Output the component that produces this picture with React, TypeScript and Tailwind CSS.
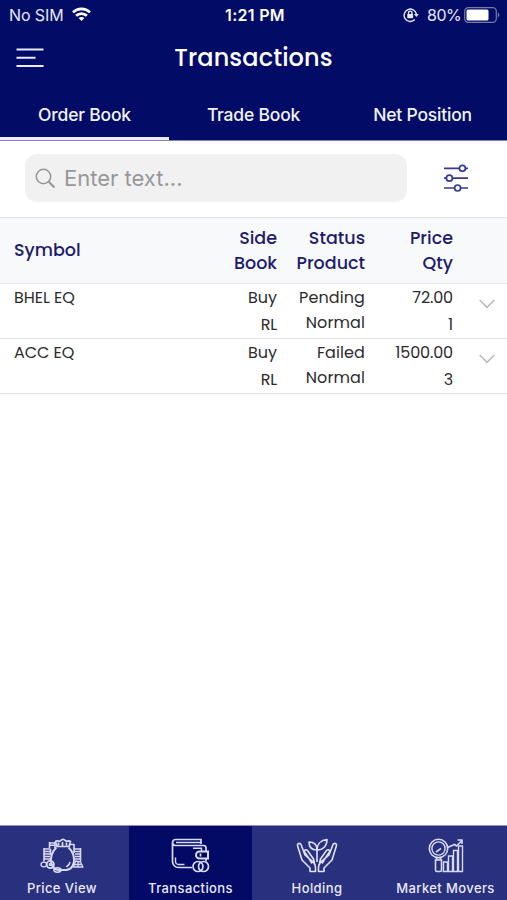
import type { ReactNode } from "react";

const geo = "font-['Poppins','Inter',sans-serif]";
const sys = "font-['Inter',sans-serif]";

function StatusBar() {
  return (
    <div className={`grid h-[30px] grid-cols-3 items-center text-[16px] leading-[30px] text-[#e4e6fa] ${sys}`}>
      <div className="flex items-center pl-[9px]">
        <span className="w-[54px] whitespace-nowrap tracking-[-0.1px]">No SIM</span>
        <svg className="mb-[2px] ml-[9px]" width="19" height="15" viewBox="0 0 19 15" fill="none" stroke="#fff" strokeWidth="2.7">
          <path d="M1 5.4C5.7.8 13.3.8 18 5.4M4.1 8.7c3-2.9 7.8-2.9 10.8 0" />
          <path d="M9.5 14 6.6 11.1c1.6-1.5 4.2-1.5 5.8 0z" fill="#fff" stroke="none" />
        </svg>
      </div>
      <div className="text-center font-semibold tracking-[0.3px] whitespace-nowrap text-white">
        <span className="pl-[3px]">1:21 PM</span>
      </div>
      <div className="flex items-center justify-end pr-[7px]">
        <svg className="mb-px" width="16" height="16" viewBox="0 0 16 16" fill="none" stroke="#e8eaff" strokeWidth="1.4">
          <path d="M11.8 12.600A6.200 6.200 0 1 1 13.400 7" />
          <path d="M11 7h4.800l-2.400 3z" fill="#e8eaff" stroke="none" />
          <rect x="4.300" y="7" width="5.800" height="4.200" fill="#e8eaff" stroke="none" />
          <path d="M5.500 7V5.800a1.700 1.700 0 0 1 3.400 0V7" />
        </svg>
        <span className="ml-[8px] w-[35px] tracking-[-0.5px] whitespace-nowrap">80%</span>
        <svg className="ml-[2px]" width="36" height="16" viewBox="0 0 36 16" fill="none">
          <rect x=".7" y=".7" width="31.6" height="14.6" rx="3.6" stroke="#777ba9" strokeWidth="1.2" />
          <rect x="2.5" y="2.5" width="22" height="11" rx="1.5" fill="#fff" />
          <path d="M33.8 5.5c2 .8 2 4.200 0 5z" fill="#777ba9" />
        </svg>
      </div>
    </div>
  );
}

function Header() {
  return (
    <div className="grid h-[56px] grid-cols-[1fr_auto_1fr] items-center">
      <svg className="ml-[16px]" width="29" height="20" viewBox="0 0 29 20" stroke="#e9eaff" strokeWidth="2">
        <path d="M.5 1.500h27M.5 9.800h19M.5 18h27" />
      </svg>
      <h1 className={`text-[24px] font-medium tracking-[0.1px] text-white ${geo}`}>Transactions</h1>
      <span />
    </div>
  );
}

const tabs = ["Order Book", "Trade Book", "Net Position"];

function Tabs() {
  return (
    <div className="grid h-[55px] grid-cols-3 border-b border-[#8583b4]">
      {tabs.map((tab, i) => (
        <div
          key={tab}
          className={`flex flex-col items-center border-b-[3px] pt-[17px] text-[17.5px] leading-[24px] font-medium tracking-[-0.2px] text-[#f2f3ff] ${sys} ${
            i === 0 ? "border-[#eeeaff]" : "border-transparent"
          }`}
        >
          {tab}
        </div>
      ))}
    </div>
  );
}

function SearchBar() {
  return (
    <div className="flex h-[76px] items-center bg-white pb-[2px] pl-[25px]">
      <div className="flex h-[48px] w-[382px] items-center rounded-[12px] bg-[#f1f1f1] pl-[10px]">
        <svg width="21" height="21" viewBox="0 0 21 21" fill="none" stroke="#97979b" strokeWidth="1.5">
          <circle cx="8.5" cy="8.5" r="7.200" />
          <path d="m13.700 13.700 5.800 5.800" strokeWidth="2" />
        </svg>
        <span className={`ml-[8px] text-[22px] text-[#97979b] ${sys}`}>Enter text...</span>
      </div>
      <svg className="ml-[37px]" width="24" height="28" viewBox="0 0 24 28" fill="none" stroke="#363b91" strokeWidth="1.7">
        <path d="M0 4.300h15.200M21.500 4.300H24M0 14.200h2.200M8.500 14.200H24M0 24h10.400M16.700 24H24" />
        <circle cx="18.400" cy="4.300" r="3" />
        <circle cx="5.400" cy="14.200" r="3" />
        <circle cx="13.600" cy="24" r="3" />
      </svg>
    </div>
  );
}

const columns = "grid grid-cols-[170px_93px_88px_88px_1fr] pl-[14px]";

function TableHead() {
  return (
    <div
      className={`${columns} h-[66.5px] items-center border-y border-[#e4e4e6] bg-[#f8f9fa] pt-px text-right text-[17.5px] leading-[24.5px] font-medium text-[#1d1b70] ${geo}`}
    >
      <div className="pb-px text-left">Symbol</div>
      <div>
        Side<br />Book
      </div>
      <div>
        Status<br />Product
      </div>
      <div>
        Price<br />Qty
      </div>
    </div>
  );
}

type Order = { symbol: string; side: string; book: string; status: string; product: string; price: string; qty: string };

const orders: Order[] = [
  { symbol: "BHEL EQ", side: "Buy", book: "RL", status: "Pending", product: "Normal", price: "72.00", qty: "1" },
  { symbol: "ACC EQ", side: "Buy", book: "RL", status: "Failed", product: "Normal", price: "1500.00", qty: "3" },
];

function OrderRow({ order }: { order: Order }) {
  return (
    <div className={`${columns} h-[55.25px] border-b border-[#e2e2e4] pt-px text-right text-[16px] leading-[25px] text-[#2b2b2d] ${geo}`}>
      <div className="text-left tracking-[-0.05px]">{order.symbol}</div>
      <div>
        <span className="block h-[27px]">{order.side}</span>
        <span className="block leading-[26px] tracking-[-0.2px]">{order.book}</span>
      </div>
      <div className="tracking-[0.1px]">
        {order.status}
        <br />
        {order.product}
      </div>
      <div className="tracking-[-0.15px]">
        <span className="block h-[27px]">{order.price}</span>
        <span className="block leading-[26px]">{order.qty}</span>
      </div>
      <svg className="mt-[14px] ml-[26px]" width="16" height="10" viewBox="0 0 16 10" fill="none" stroke="#b9b9c1" strokeWidth="1.500">
        <path d="m.7 1 7.300 7.400L15.300 1" />
      </svg>
    </div>
  );
}

function MoneyIcon() {
  return (
    <svg width="44" height="36" viewBox="0 0 44 36" fill="none" stroke="#d9dbf5" strokeWidth="1.3" strokeLinejoin="round">
      <path d="M16.500 9.500c-5 4-6.500 11-5 16 1 4 4 6 7 6.500h8c3-.5 6-2.500 7-6.500 1.500-5 0-12-5-16" strokeWidth="2" />
      <path d="M17 8.500 15.500 3.500c2-1.500 4 .5 5-.8 1.500-1.700 3.500-1.700 5 0 1 1.300 3-.7 5 .8L29 8.500zM18.500 4.500v3M22.500 4v4M26.500 4.500v3" strokeWidth="1.700" />
      <path d="M30 24c-.5 2.500-2 4-4 5" />
      <path d="M4 11h6.500M4 13.500h6.500M4 16h6M4 18.500h6M4 21h6M4 10v13.500M10.500 11v6M9.500 5h5.500M9.500 7.200h5.500M9.500 4v6M15 4v6" strokeWidth="1.600" />
      <path d="M34 11h6.500M34 13.500h6.500M35 16h5.500M35 18.500h5.500M35 21h5.500M40.500 10v13.500M34 10v5M30 6.500h4V10" strokeWidth="1.600" />
      <ellipse cx="3.800" cy="26.500" rx="2.800" ry="2.300" />
      <circle cx="10.300" cy="26.500" r="3.600" strokeWidth="1.800" />
      <circle cx="10.300" cy="26.500" r="1" />
      <ellipse cx="17.500" cy="32" rx="3.500" ry="2.200" strokeWidth="1.600" />
      <path d="m35.500 23-2 6h9.500l-2.500-5zM35 26.500h7M38 23v6" />
    </svg>
  );
}

function WalletIcon() {
  return (
    <svg width="40" height="36" viewBox="0 0 40 36" fill="none" stroke="#dadcf7" strokeWidth="1.700">
      <path d="M21 29.500H7.500A6 6 0 0 1 1.500 23.500V4.500C1.500 2.600 2.800 1.500 4.500 1.500H30V6M1.500 4.500C1.500 6.500 2.800 7.500 4.500 7.500h28A2.500 2.500 0 0 1 35 10v3M5 4.500h25M35 20v3.500" />
      <path d="M4.500 19.500v4a3 3 0 0 0 3 3h6M22 10.200h8.500V13" strokeWidth="1.400" />
      <path d="M28.500 13.500H37v7h-8.500a3.500 3.500 0 0 1 0-7z" strokeWidth="2" />
      <path d="M29.500 15.500v3" />
      <circle cx="27" cy="28.500" r="5" />
      <circle cx="32.500" cy="28.500" r="5" />
    </svg>
  );
}

function HoldingIcon() {
  return (
    <svg width="42" height="36" viewBox="0 0 42 36" fill="none" stroke="#e0e2fb" strokeWidth="1.600" strokeLinejoin="round">
      <path d="M21 24V12M21 12c-5 0-8-3-8-8 5 0 8 3 8 8zM21 12c0-6 4-10 10-10.500C31 8 27 12 21 12z" />
      <path d="M14 33.500V30L6 22 1.500 7.500c-.5-2 2.500-3 3.500-1L9 17l4.500 4c3 2 6 5 6 8.500v4zM13 20.500 8.500 14c-1-2 1.500-3 3-1.500l6 8.500 1 4M13 20.500l3 5" />
      <path d="M28 33.500V30l8-8 4.500-14.500c.5-2-2.500-3-3.500-1L33 17l-4.500 4c-3 2-6 5-6 8.500v4zM29 20.500l4.500-6.500c1-2-1.500-3-3-1.500l-6 8.500-1 4M29 20.500l-3 5" />
    </svg>
  );
}

function MoversIcon() {
  return (
    <svg width="36" height="36" viewBox="0 0 36 36" fill="none" stroke="#d8daf5" strokeWidth="1.400">
      <circle cx="10.500" cy="10.500" r="9.200" strokeWidth="1.600" />
      <circle cx="10.500" cy="10.500" r="6.600" />
      <path d="M8.500 19.500h4v2.500h-4zM7.500 22h6v10a1.500 1.500 0 0 1-1.500 1.500H9a1.500 1.500 0 0 1-1.500-1.500z" strokeWidth="1.600" />
      <path d="m8 14 5-3.500M19.500 9.500l7-3 2 1.500 5-5M29.500 2h4.500v4" strokeWidth="1.600" />
      <path d="M15.500 33.500V24h4v9.500M20.500 33.500V18h4v15.500M25.500 33.500v-21h4v21M30.500 33.500V8h4v25.500M14.500 33.500h20.500" />
    </svg>
  );
}

const navItems: { label: string; icon: ReactNode; active?: boolean }[] = [
  { label: "Price View", icon: <MoneyIcon /> },
  { label: "Transactions", icon: <WalletIcon />, active: true },
  { label: "Holding", icon: <HoldingIcon /> },
  { label: "Market Movers", icon: <MoversIcon /> },
];

function BottomNav() {
  return (
    <nav className="grid h-[75px] grid-cols-[129px_123px_130px_125px] border-t border-[#8d90b8] bg-[#29307e]">
      {navItems.map((item, i) => (
        <div
          key={item.label}
          className={`flex flex-col items-center pt-[12px] text-[13px] leading-[20px] font-medium tracking-[0.4px] whitespace-nowrap text-[#e8e9fb] ${sys} ${
            item.active ? "bg-[#020a66]" : ""
          } ${i === 0 ? "pr-[5px]" : ""} ${i === 3 ? "pl-[2px]" : ""}`}
        >
          {item.icon}
          <span className="mt-[4px]">{item.label}</span>
        </div>
      ))}
    </nav>
  );
}

export default function App() {
  return (
    <div className="flex h-[900px] w-[507px] flex-col overflow-hidden bg-white">
      <header className="bg-[#020c66]">
        <StatusBar />
        <Header />
        <Tabs />
      </header>
      <SearchBar />
      <main className="flex-1">
        <TableHead />
        {orders.map((order) => (
          <OrderRow key={order.symbol} order={order} />
        ))}
      </main>
      <BottomNav />
    </div>
  );
}
